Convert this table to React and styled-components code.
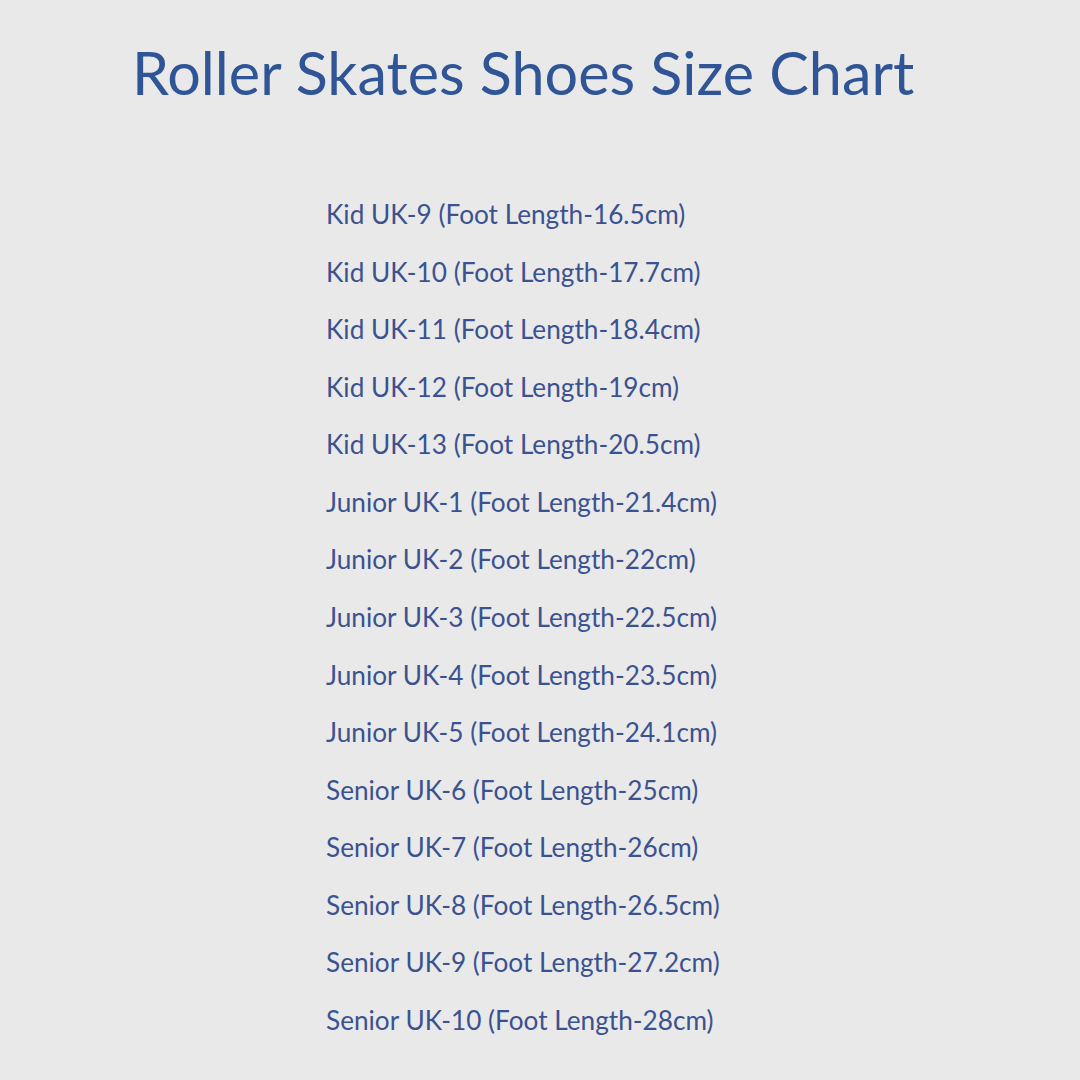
import React from "react";
import styled, { createGlobalStyle } from "styled-components";

const Global = createGlobalStyle`
  html, body { margin: 0; padding: 0; background: #e9e9e9; }
  body { font-family: Lato, "Open Sans", sans-serif; }
`;

const Page = styled.div`
  width: 1080px;
  height: 1080px;
  background: #e9e9e9;
  box-sizing: border-box;
  display: flex;
  flex-direction: column;
  overflow: hidden;
`;

const Title = styled.h1`
  margin: 0;
  padding: 36px 0 0 132px;
  font-family: Lato, sans-serif;
  font-weight: 400;
  font-size: 59.3px;
  line-height: 72px;
  color: #2f5597;
  white-space: nowrap;
`;

const List = styled.ul`
  list-style: none;
  margin: 0;
  padding: 78px 0 0 326px;
  display: flex;
  flex-direction: column;
`;

const Item = styled.li`
  font-family: Lato, sans-serif;
  font-size: 26.2px;
  line-height: 57.57px;
  color: #3b5290;
  white-space: nowrap;
`;

const rows = [
  "Kid UK-9 (Foot Length-16.5cm)",
  "Kid UK-10 (Foot Length-17.7cm)",
  "Kid UK-11 (Foot Length-18.4cm)",
  "Kid UK-12 (Foot Length-19cm)",
  "Kid UK-13 (Foot Length-20.5cm)",
  "Junior UK-1 (Foot Length-21.4cm)",
  "Junior UK-2 (Foot Length-22cm)",
  "Junior UK-3 (Foot Length-22.5cm)",
  "Junior UK-4 (Foot Length-23.5cm)",
  "Junior UK-5 (Foot Length-24.1cm)",
  "Senior UK-6 (Foot Length-25cm)",
  "Senior UK-7 (Foot Length-26cm)",
  "Senior UK-8 (Foot Length-26.5cm)",
  "Senior UK-9 (Foot Length-27.2cm)",
  "Senior UK-10 (Foot Length-28cm)",
];

export default function App() {
  return (
    <Page>
      <Global />
      <Title>Roller Skates Shoes Size Chart</Title>
      <List>
        {rows.map((r) => (
          <Item key={r}>{r}</Item>
        ))}
      </List>
    </Page>
  );
}
